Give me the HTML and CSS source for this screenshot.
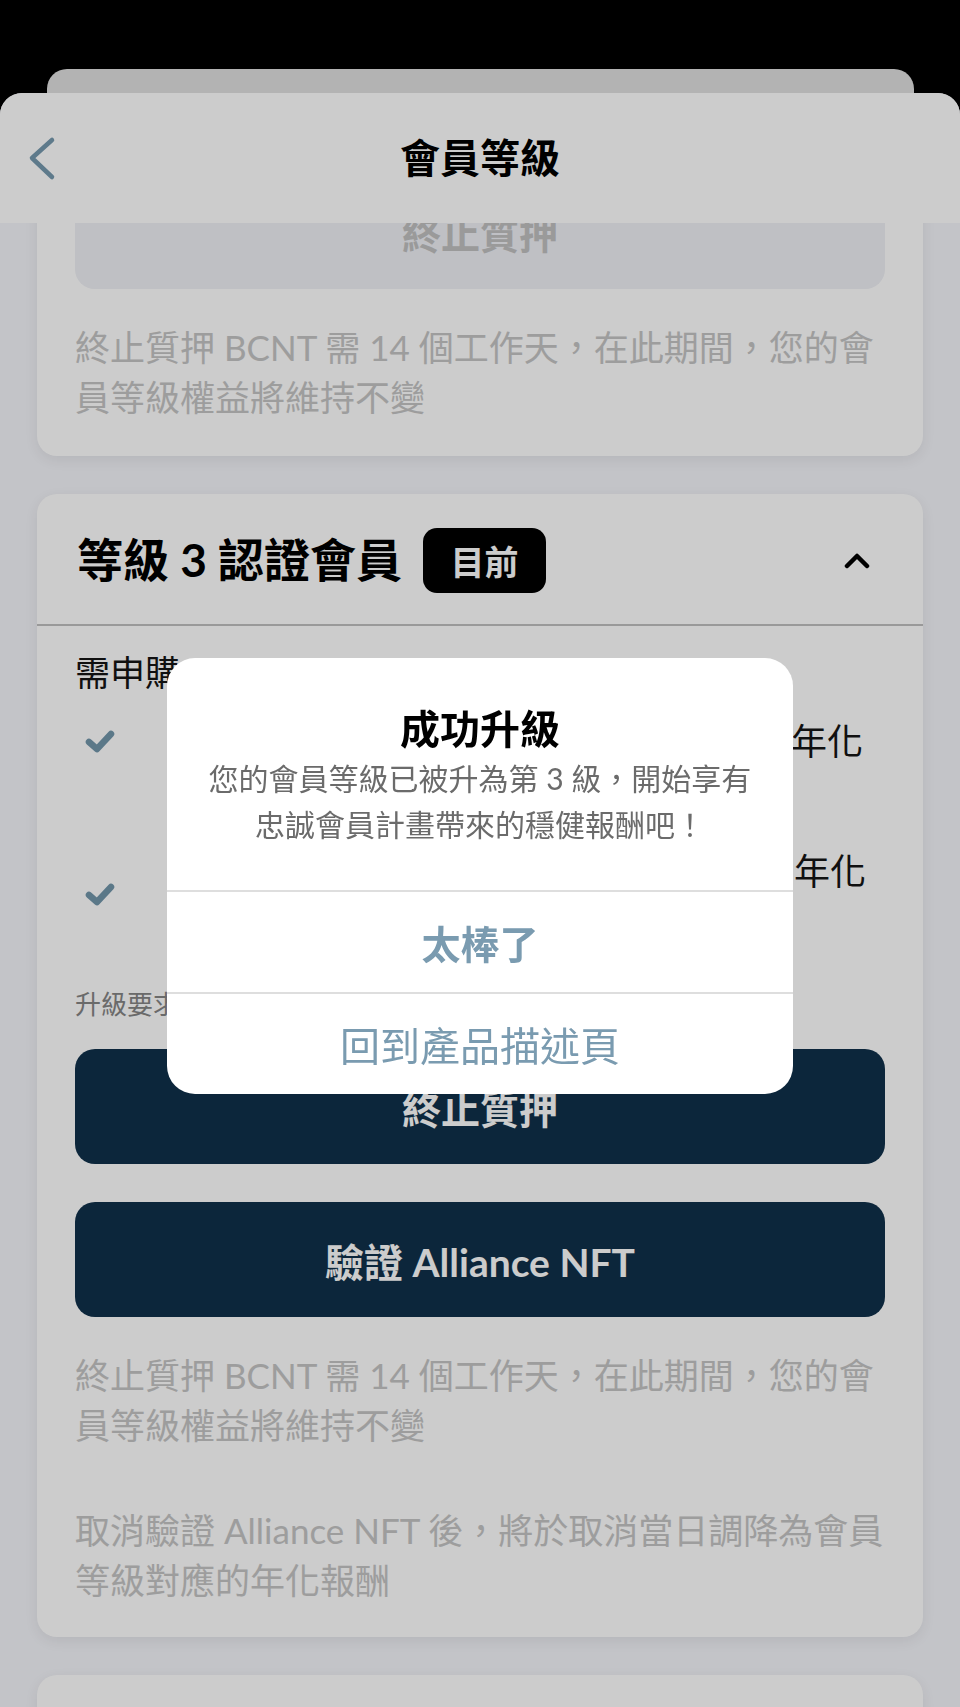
FILE: index.html
```html
<!DOCTYPE html>
<html lang="zh-Hant">
<head>
<meta charset="utf-8">
<title>會員等級</title>
<link rel="stylesheet" href="styles.css">
</head>
<body>
<div class="app">
  <div class="sheet-back"></div>
  <div class="sheet">
    <header class="nav">
      <button class="nav-back" aria-label="返回">
        <svg width="30" height="46" viewBox="0 0 30 46"><polyline points="24,4 4,22 24,41" fill="none" stroke="#7699ae" stroke-width="4.5" stroke-linecap="round" stroke-linejoin="round"/></svg>
      </button>
      <h1 class="nav-title">會員等級</h1>
      <span class="nav-spacer"></span>
    </header>
    <main class="scroll">
      <div class="scroll-inner">
        <section class="card card-partial">
          <div class="card-body">
            <button class="btn btn-disabled">終止質押</button>
            <p class="note first">終止質押 BCNT 需 14 個工作天，在此期間，您的會員等級權益將維持不變</p>
          </div>
        </section>

        <section class="card">
          <div class="card-head">
            <h2 class="level-title">等級 3 認證會員</h2>
            <span class="badge">目前</span>
            <svg class="collapse" width="26" height="16" viewBox="0 0 26 16"><polyline points="3,13 13,3 23,13" fill="none" stroke="#000" stroke-width="4.5" stroke-linecap="round" stroke-linejoin="round"/></svg>
          </div>
          <div class="card-body">
            <p class="need">需申購：</p>
            <div class="req-row single">
              <svg class="check" width="30" height="26" viewBox="0 0 30 26"><polyline points="4,13 12,20 26,5" fill="none" stroke="#7296ab" stroke-width="6.5" stroke-linecap="round" stroke-linejoin="round"/></svg>
              <div class="req-text"><span class="line-end">持有 BCNT 質押 50,000 顆，享 6% 年化</span></div>
            </div>
            <div class="req-row">
              <svg class="check" width="30" height="26" viewBox="0 0 30 26"><polyline points="4,13 12,20 26,5" fill="none" stroke="#7296ab" stroke-width="6.5" stroke-linecap="round" stroke-linejoin="round"/></svg>
              <div class="req-text"><span class="line-end">驗證 Alliance NFT，再加碼 2% 年化</span><span>報酬</span></div>
            </div>
            <p class="hint">升級要求：完成上述任一條件</p>
            <button class="btn btn-dark">終止質押</button>
            <button class="btn btn-dark second">驗證 Alliance NFT</button>
            <p class="note first">終止質押 BCNT 需 14 個工作天，在此期間，您的會員等級權益將維持不變</p>
            <p class="note later">取消驗證 Alliance NFT 後，將於取消當日調降為會員等級對應的年化報酬</p>
          </div>
        </section>

        <section class="card card-next"></section>
      </div>
    </main>
  </div>
</div>

<div class="overlay">
  <div class="alert" role="alertdialog">
    <div class="alert-body">
      <h3 class="alert-title">成功升級</h3>
      <p class="alert-msg">您的會員等級已被升為第 3 級，開始享有忠誠會員計畫帶來的穩健報酬吧！</p>
    </div>
    <button class="alert-action primary">太棒了</button>
    <button class="alert-action">回到產品描述頁</button>
  </div>
</div>
</body>
</html>
```

FILE: styles.css
```css
* { box-sizing: border-box; }

html, body {
  margin: 0;
  padding: 0;
}

body {
  width: 960px;
  height: 1707px;
  overflow: hidden;
  font-family: "Lato", "Noto Sans CJK TC", "Noto Sans CJK SC", sans-serif;
  background: #000;
}

button {
  font-family: inherit;
  border: 0;
  background: none;
  padding: 0;
  margin: 0;
  cursor: pointer;
}

h1, h2, h3, p { margin: 0; }

.app {
  height: 1707px;
  background: #000;
  padding-top: 69px;
  overflow: hidden;
}

.sheet-back {
  height: 24px;
  margin: 0 46px 0 47px;
  background: #e0e0e0;
  border-radius: 20px 20px 0 0;
}

.sheet {
  height: 1614px;
  background: #f4f5fa;
  border-radius: 22px 22px 0 0;
  overflow: hidden;
  display: flex;
  flex-direction: column;
}

.nav {
  height: 130px;
  flex: none;
  background: #ffffff;
  display: grid;
  grid-template-columns: 1fr auto 1fr;
  align-items: center;
  position: relative;
  z-index: 2;
}

.nav-back {
  justify-self: start;
  margin-left: 28px;
  margin-top: 2px;
  display: flex;
}

.nav-title {
  font-size: 40px;
  font-weight: 700;
  color: #000;
  line-height: 1;
}

.scroll {
  flex: 1;
  overflow: hidden;
}

.scroll-inner {
  margin-top: -79px;
  padding: 0 37px;
  display: flex;
  flex-direction: column;
  gap: 38px;
}

.card {
  background: #ffffff;
  border-radius: 20px;
  box-shadow: 0 4px 14px rgba(0, 0, 0, 0.07);
}

.card-partial .card-body {
  padding-top: 30px;
  padding-bottom: 34px;
}

.card-next {
  height: 200px;
}

.card-head {
  height: 132px;
  display: flex;
  align-items: center;
  padding: 2px 53px 0 40px;
  border-bottom: 2px solid #c0c0c0;
}

.level-title {
  font-size: 46px;
  font-weight: 700;
  color: #000;
  line-height: 1;
}

.badge {
  margin-left: 21px;
  width: 123px;
  height: 65px;
  border-radius: 14px;
  background: #000;
  color: #fff;
  font-size: 34px;
  font-weight: 700;
  display: flex;
  align-items: center;
  justify-content: center;
}

.collapse {
  margin-left: auto;
  margin-top: 2px;
}

.card-body {
  padding: 0 38px 32px;
  display: flex;
  flex-direction: column;
}

.need {
  margin-top: 22px;
  font-size: 35px;
  line-height: 48px;
  color: #151515;
}

.req-row {
  display: flex;
  align-items: center;
  margin-top: 72px;
  padding-left: 10px;
}

.req-row.single {
  align-items: flex-start;
  margin-top: 21px;
  padding-bottom: 10px;
}

.req-row.single .check { margin-top: 12px; }

.check { flex: none; }

.req-text {
  flex: 1;
  font-size: 36px;
  line-height: 48px;
  color: #151515;
  padding-left: 70px;
  padding-right: 19px;
  display: flex;
  flex-direction: column;
}

.req-row.single .req-text { padding-right: 22px; }

.req-text .line-end {
  text-align: right;
}

.hint {
  margin-top: 43px;
  font-size: 26px;
  line-height: 36px;
  color: #858585;
}

.btn {
  height: 115px;
  border-radius: 20px;
  font-size: 39px;
  font-weight: 700;
  display: flex;
  align-items: center;
  justify-content: center;
  width: 100%;
}

.btn-dark {
  margin-top: 27px;
  background: #10304a;
  color: #ffffff;
}

.btn-dark.second { margin-top: 38px; }

.btn-disabled {
  background: #eff0f5;
  color: #c1c1c1;
}

.note {
  font-size: 35px;
  line-height: 50px;
  color: #c5c5c5;
}

.note.first { margin-top: 33px; }
.note.later { margin-top: 55px; }

.overlay {
  position: fixed;
  inset: 0;
  background: rgba(0, 0, 0, 0.2);
  display: flex;
  justify-content: center;
  align-items: flex-start;
  padding-top: 658px;
  z-index: 10;
}

.alert {
  width: 626px;
  background: #ffffff;
  border-radius: 28px;
  overflow: hidden;
  display: flex;
  flex-direction: column;
}

.alert-body {
  padding: 45px 30px 43px;
  text-align: center;
}

.alert-title {
  font-size: 40px;
  line-height: 52px;
  font-weight: 700;
  color: #000;
}

.alert-msg {
  font-size: 30px;
  line-height: 46px;
  color: #6b6b6b;
}

.alert-action {
  height: 102px;
  border-top: 2px solid #dedede;
  font-size: 40px;
  color: #7a9bb0;
  display: flex;
  align-items: center;
  justify-content: center;
  width: 100%;
}

.alert-action.primary {
  font-size: 39px;
  font-weight: 700;
}
```
